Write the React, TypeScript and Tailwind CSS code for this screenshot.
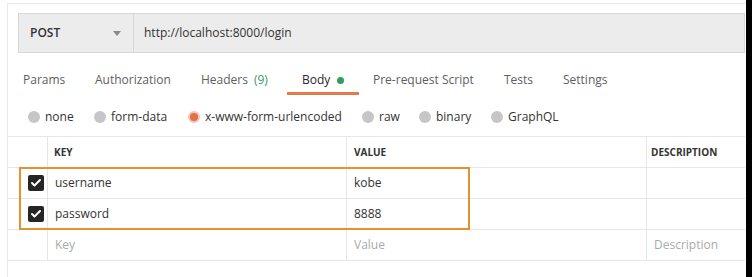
import { Check } from 'lucide-react';

const tabs = [
  { label: 'Params', w: 'w-[72px]' },
  { label: 'Authorization', w: 'w-[106px]' },
  { label: 'Headers', w: 'w-[86px]', count: '(9)' },
  { label: 'Body', w: 'w-[72px] pl-[15px]', active: true },
  { label: 'Pre-request Script', w: 'w-[145px] pl-[14px]' },
  { label: 'Tests', w: 'w-[59px]' },
  { label: 'Settings', w: 'w-[80px]' },
];

const bodyTypes = [
  { label: 'none', w: 'w-[66px]' },
  { label: 'form-data', w: 'w-[94px]' },
  { label: 'x-www-form-urlencoded', w: 'w-[174px]', selected: true },
  { label: 'raw', w: 'w-[57px]' },
  { label: 'binary', w: 'w-[72px]' },
  { label: 'GraphQL', w: 'w-[90px]' },
];

const rows = [
  { key: 'username', value: 'kobe' },
  { key: 'password', value: '8888' },
];

function Row({ children }: { children: React.ReactNode }) {
  return <div className="flex h-[31px] items-center border-b border-[#e6e6e6]">{children}</div>;
}

export default function App() {
  return (
    <div className="flex h-[277px] w-[752px] overflow-hidden bg-white font-['Open_Sans',sans-serif] text-[12px]">
      <div className="ml-[7px] mt-[3px] flex w-[739px] flex-col border-l border-t border-[#e8e8e8]">
        {/* url bar */}
        <div className="ml-[10px] mr-[1px] mt-[9px] flex h-[40px] border border-[#d8d8d8] bg-[#ececec]">
          <div className="flex w-[115px] items-center justify-between border-r border-[#d8d8d8] pl-[11px] pr-[12px]">
            <span className="font-semibold text-[#333]">POST</span>
            <svg width="8" height="5" viewBox="0 0 8 5">
              <path d="M0 0h8L4 5z" fill="#888" />
            </svg>
          </div>
          <div className="flex items-center pl-[10px] text-[#333]">http://localhost:8000/login</div>
        </div>

        {/* tabs */}
        <div className="mt-[12px] flex h-[30px] pl-[15px]">
          {tabs.map((t) => (
            <div
              key={t.label}
              className={`${t.w} flex shrink-0 items-center whitespace-nowrap ${
                t.active ? 'border-b-[3px] border-[#df7b4d] pt-[3px] text-[#282828]' : 'text-[#606060]'
              }`}
            >
              {t.label}
              {t.count && <span className="ml-[6px] text-[#3c9a5f]">{t.count}</span>}
              {t.active && <span className="ml-[7px] h-[7px] w-[7px] rounded-full bg-[#2f9e5b]" />}
            </div>
          ))}
        </div>

        {/* body type radios */}
        <div className="mt-[12px] flex h-[20px] items-center pl-[20px]">
          {bodyTypes.map((b) => (
            <div key={b.label} className={`${b.w} flex shrink-0 items-center gap-[5px] whitespace-nowrap text-[#333]`}>
              {b.selected ? (
                <span className="flex h-[12px] w-[12px] items-center justify-center rounded-full bg-[#f3c6b4]">
                  <span className="h-[8px] w-[8px] rounded-full bg-[#e0714c]" />
                </span>
              ) : (
                <span className="h-[12px] w-[12px] rounded-full bg-[#c6c6c6]" />
              )}
              {b.label}
            </div>
          ))}
        </div>

        {/* params table */}
        <div className="relative mr-[1px] mt-[9px] border-t border-[#e6e6e6]">
          <Row>
            <div className="h-full w-[40px] border-r border-[#e6e6e6]" />
            <div className="flex h-full w-[299px] items-center border-r border-[#e6e6e6] pl-[6px] text-[10px] font-bold text-[#333]">KEY</div>
            <div className="flex h-full w-[300px] items-center border-r border-[#e6e6e6] pl-[7px] text-[10px] font-bold text-[#333]">VALUE</div>
            <div className="flex h-full flex-1 items-center pl-[4px] text-[10px] font-bold text-[#333]">DESCRIPTION</div>
          </Row>
          {rows.map((r) => (
            <Row key={r.key}>
              <div className="flex h-full w-[40px] items-center border-r border-[#e6e6e6] pl-[20px]">
                <span className="flex h-[16px] w-[16px] items-center justify-center rounded-[2px] bg-[#262626]">
                  <Check className="h-[12px] w-[12px] text-white" strokeWidth={4} />
                </span>
              </div>
              <div className="flex h-full w-[299px] items-center border-r border-[#e6e6e6] pl-[7px] text-[#333]">{r.key}</div>
              <div className="flex h-full w-[300px] items-center border-r border-[#e6e6e6] pl-[7px] text-[#333]">{r.value}</div>
              <div className="h-full flex-1" />
            </Row>
          ))}
          <Row>
            <div className="h-full w-[40px] border-r border-[#e6e6e6]" />
            <div className="flex h-full w-[299px] items-center border-r border-[#e6e6e6] pl-[7px] text-[#aaa]">Key</div>
            <div className="flex h-full w-[300px] items-center border-r border-[#e6e6e6] pl-[7px] text-[#aaa]">Value</div>
            <div className="flex h-full flex-1 items-center pl-[7px] text-[#aaa]">Description</div>
          </Row>
          {/* highlight */}
          <div className="pointer-events-none absolute left-[11px] top-[30px] h-[63px] w-[451px] border-2 border-[#e4912f]" />
        </div>
      </div>
      <div className="ml-auto w-[6px] bg-black" />
    </div>
  );
}
